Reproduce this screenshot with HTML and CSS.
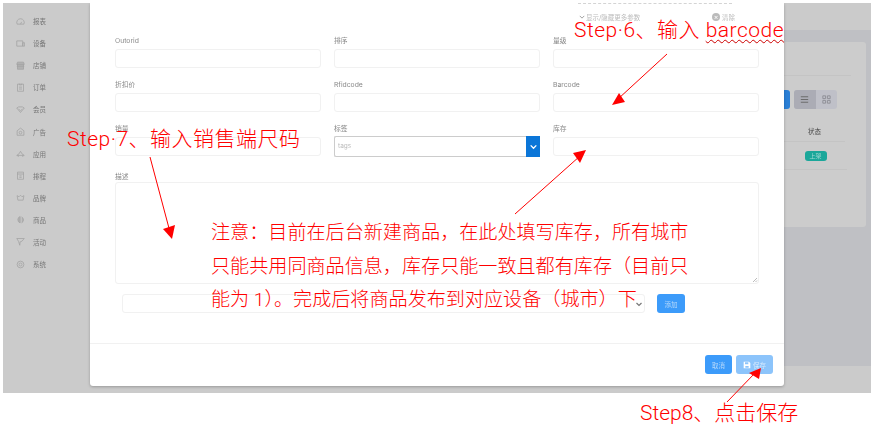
FILE: index.html
```html
<!DOCTYPE html>
<html lang="en">
<head>
	<meta charset="UTF-8">
	<title>新建商品</title>
	<link rel="stylesheet" href="styles.css">
</head>
<body>
	<div class="shot">
		<!-- page behind the dialog -->
		<div class="sidebar">
			<div class="nav-item"><svg viewBox="0 0 12 12"><path d="M1.500 9.500a5 5 0 1 1 9 0zM6 9.500l1.500-3"/></svg>报表</div>
			<div class="nav-item"><svg viewBox="0 0 12 12"><path d="M1 2.500h8v7H1zM9 5h2.500v4.500H9z"/></svg>设备</div>
			<div class="nav-item"><svg class="solid" viewBox="0 0 12 12"><path d="M2 1.500h8l1 3H1zM2 4.500V11h8V4.500M1 7h10"/></svg>店铺</div>
			<div class="nav-item"><svg viewBox="0 0 12 12"><path d="M2 1.500h8V11H2zM4.500 1v1.500h3V1M4 5.500h4M4 8h4"/></svg>订单</div>
			<div class="nav-item"><svg viewBox="0 0 12 12"><path d="M1 4 3.500 2.500h5L11 4 6 10zM3.500 5.500 6 7.500l2.500-2"/></svg>会员</div>
			<div class="nav-item"><svg viewBox="0 0 12 12"><path d="M1.500 5 6 1.500 10.500 5v6h-9z"/><circle cx="6" cy="7.500" r="1.800"/></svg>广告</div>
			<div class="nav-item"><svg viewBox="0 0 12 12"><path d="M6 3 8 6.500 11 8.500H1L4 6.500zM3 8.500V10.500M9 8.500V10.500"/></svg>应用</div>
			<div class="nav-item"><svg viewBox="0 0 12 12"><path d="M2 1.500h8V11H2zM2 4h8M4.500 6.500h3M4.500 8.500h3"/></svg>排程</div>
			<div class="nav-item"><svg viewBox="0 0 12 12"><path d="M1.500 3.500 4 5l2-2 2 2 2.500-1.500-1 6h-7z"/></svg>品牌</div>
			<div class="nav-item"><svg class="solid" viewBox="0 0 12 12"><path d="M5.500 2v8.500a4.500 4.500 0 0 1 0-8.500zM7.500 2.500a4.500 4.500 0 0 1 0 8"/></svg>商品</div>
			<div class="nav-item"><svg viewBox="0 0 12 12"><path d="M1 2h10L8 5.500 5.500 6.500 5 11 3.500 6z"/></svg>活动</div>
			<div class="nav-item"><svg viewBox="0 0 12 12"><circle cx="6" cy="6" r="4.500"/><circle cx="6" cy="6" r="2"/></svg>系统</div>
		</div>
		<div class="backdrop">
			<div class="top-strip"></div>
			<div class="band">
				<div class="card">
					<div class="card-rule"></div>
					<div class="toolbar">
						<div class="blue-btn"></div>
						<div class="toggle">
							<span class="toggle-on"><svg viewBox="0 0 12 12"><path d="M2 3h8M2 6h8M2 9h8"/></svg></span>
							<span class="toggle-off"><svg viewBox="0 0 12 12"><path d="M2 2h3v3H2zM7 2h3v3H7zM2 7h3v3H2zM7 7h3v3H7z"/></svg></span>
						</div>
					</div>
					<div class="col-head">状态</div>
					<div class="col-cell"><span class="badge">上架</span></div>
				</div>
			</div>
		</div>

		<!-- dialog -->
		<div class="modal">
			<div class="modal-body">
				<div class="dots"></div>
				<div class="more-row">
					<span class="more"><svg viewBox="0 0 8 8"><path d="M1 2.500 4 5.500 7 2.500"/></svg>显示/隐藏更多参数</span>
					<span class="clear"><i>×</i>清除</span>
				</div>
				<div class="form-grid">
					<div class="field"><label>Outorid</label><div class="input"></div></div>
					<div class="field"><label>排序</label><div class="input"></div></div>
					<div class="field"><label>量级</label><div class="input"></div></div>
					<div class="field"><label>折扣价</label><div class="input"></div></div>
					<div class="field"><label>Rfidcode</label><div class="input"></div></div>
					<div class="field"><label>Barcode</label><div class="input"></div></div>
					<div class="field"><label>销量</label><div class="input"></div></div>
					<div class="field"><label>标签</label>
						<div class="tags"><span>tags</span><b><svg viewBox="0 0 8 8"><path d="M1.500 3 4 5.500 6.500 3"/></svg></b></div>
					</div>
					<div class="field"><label>库存</label><div class="input"></div></div>
				</div>
				<div class="field desc"><label>描述</label><div class="textarea"><svg viewBox="0 0 6 6"><path d="M1 5 5 1M3.500 5 5 3.500"/></svg></div></div>
				<div class="add-row">
					<div class="select"><svg viewBox="0 0 8 8"><path d="M1.500 3 4 5.500 6.500 3"/></svg></div>
					<button class="btn btn-add">添加</button>
				</div>
			</div>
			<div class="modal-foot">
				<button class="btn">取消</button>
				<button class="btn btn-save"><svg viewBox="0 0 12 12"><path fill-rule="evenodd" d="M1 1h8l2 2v8H1zM3 2v3h5V2zM3.500 7.500v2.500h5V7.500z"/></svg>保存</button>
			</div>
		</div>
	</div>

	<!-- red annotations drawn on top of the screenshot -->
	<svg class="arrows" viewBox="0 0 876 426">
		<path d="M667 54 618 99M150 157 170 232M515 214 580 156M727 402 755 373"/>
		<polygon class="head" points="612,105 619,93 625,102"/>
		<polygon class="head" points="172,239 163,229 175,225"/>
		<polygon class="head" points="586,150 573,153 580,163"/>
		<polygon class="head" points="761,368 749,373 759,379"/>
	</svg>
	<div class="note step6">Step·6、输入 <u>barcode</u></div>
	<div class="note step7">Step·7、输入销售端尺码</div>
	<div class="note step8">Step8、点击保存</div>
	<div class="note warn">注意：目前在后台新建商品，在此处填写库存，所有城市<br>只能共用同商品信息，库存只能一致且都有库存（目前只<br>能为 1）。完成后将商品发布到对应设备（城市）下</div>
</body>
</html>
```

FILE: styles.css
```css
html, body {
	margin: 0;
	padding: 0;
	background-color: #fff;
	overflow: hidden;
}

body {
	width: 876px;
	height: 426px;
	position: relative;
	font-family: Inter, "Noto Sans CJK SC", sans-serif;
}

/* the captured page is a little soft, the annotations are not */
.shot {
	position: relative;
	display: flex;
	width: 868px;
	height: 390px;
	margin: 3px 0 0 3px;
	background-color: #cbcbcb;
	overflow: hidden;
	filter: blur(0.4px);
}

/* sidebar */
.sidebar {
	width: 87px;
	flex: none;
	padding-top: 7px;
	box-sizing: border-box;
	background-color: #cbcbcb;
}

.nav-item {
	display: flex;
	align-items: center;
	gap: 8px;
	height: 22.100px;
	padding-left: 13px;
	font-size: 6.500px;
	color: #777;
}

.nav-item svg {
	width: 9px;
	height: 9px;
	fill: none;
	stroke: #a2a2a2;
	stroke-width: 1;
}

.nav-item svg.solid {
	fill: #b2b2b2;
}

/* page behind dialog */
.backdrop {
	flex: 1;
	display: flex;
	flex-direction: column;
}

.top-strip {
	height: 27px;
}

.band {
	height: 336px;
	background-color: #bfc0c4;
	padding: 12px 5px 0 0;
	box-sizing: border-box;
}

.card {
	height: 185px;
	background-color: #cccccc;
	padding-left: 694px;
	border-radius: 0 3px 3px 0;
}

.card-rule {
	height: 1px;
	background-color: #c4c4c4;
	position: relative;
	top: 33px;
	width: 67px;
}

.toolbar {
	display: flex;
	gap: 4px;
	padding-top: 47px;
	height: 19px;
}

.blue-btn {
	width: 6px;
	height: 19px;
	background-color: #2a7fd6;
	border-radius: 0 3px 3px 0;
}

.toggle {
	display: flex;
	width: 43px;
	height: 19px;
	border-radius: 3px;
	overflow: hidden;
	background-color: #bfc0c8;
}

.toggle span {
	flex: 1;
	display: flex;
	align-items: center;
	justify-content: center;
}

.toggle-on {
	background-color: #abacb5;
}

.toggle svg {
	width: 11px;
	height: 11px;
	fill: none;
	stroke: #666;
	stroke-width: 1;
}

.toggle-off svg {
	stroke: #8d8d95;
}

.col-head {
	width: 61px;
	margin-top: 17px;
	height: 15px;
	font-size: 6.500px;
	color: #444;
	text-align: center;
	border-bottom: 1px solid #c4c4c4;
}

.col-cell {
	display: flex;
	justify-content: center;
	align-items: flex-start;
	width: 63px;
	height: 18px;
	padding-top: 9px;
	border-bottom: 1px solid #c4c4c4;
	line-height: 10px;
}

.badge {
	display: block;
	width: 22px;
	height: 10px;
	border-radius: 3px;
	background-color: #1ba79a;
	color: #9fd8d2;
	font-size: 6px;
	text-align: center;
}

/* dialog */
.modal {
	position: absolute;
	left: 87px;
	top: 0;
	width: 694px;
	height: 383px;
	background-color: #fff;
	border-radius: 0 0 3px 3px;
	box-shadow: 0 1px 3px rgba(0, 0, 0, 0.25);
	display: flex;
	flex-direction: column;
}

.modal-body {
	height: 341px;
	box-sizing: border-box;
	padding: 0 25px;
	border-bottom: 1px solid #f1f1f1;
}

.dots {
	width: 154px;
	margin-left: 463px;
	border-top: 1px dashed #d4d4d4;
}

.more-row {
	display: flex;
	height: 24px;
	padding: 9px 0 0 464px;
	box-sizing: border-box;
	font-size: 6.500px;
	color: #bbb;
}

.more {
	display: flex;
	align-items: center;
	gap: 1px;
	height: 8px;
	width: 133px;
}

.more svg {
	width: 6px;
	height: 6px;
	fill: none;
	stroke: #999;
	stroke-width: 1.2;
}

.clear {
	display: flex;
	align-items: center;
	gap: 2px;
	height: 8px;
}

.clear i {
	width: 8px;
	height: 8px;
	border-radius: 50%;
	background-color: #bbb;
	color: #fff;
	font-style: normal;
	font-size: 7px;
	line-height: 8px;
	text-align: center;
}

.form-grid {
	display: grid;
	grid-template-columns: 206px 206px 206px;
	column-gap: 13px;
	row-gap: 13px;
	padding-top: 9px;
}

.field label {
	display: block;
	height: 12px;
	font-size: 6.800px;
	line-height: 7px;
	color: #888;
}

.input {
	height: 19px;
	box-sizing: border-box;
	border: 1px solid #f1f1f1;
	border-radius: 3px;
}

.tags {
	display: flex;
	height: 21px;
	margin-top: -1px;
	box-sizing: border-box;
	border: 1px solid #ccc;
	border-right: none;
	border-radius: 2px;
	font-size: 6.500px;
	line-height: 19px;
	color: #bbb;
}

.tags span {
	flex: 1;
	padding-left: 3px;
}

.tags b {
	display: flex;
	align-items: center;
	justify-content: center;
	width: 14px;
	margin: -1px 0;
	background-color: #0b76d8;
}

.tags svg {
	width: 9px;
	height: 9px;
	fill: none;
	stroke: #fff;
	stroke-width: 1.2;
}

.desc {
	margin-top: 16px;
}

.desc label {
	height: 9px;
}

.textarea {
	display: flex;
	justify-content: flex-end;
	align-items: flex-end;
	height: 102px;
	box-sizing: border-box;
	border: 1px solid #f1f1f1;
	border-radius: 3px;
}

.textarea svg {
	width: 6px;
	height: 6px;
	fill: none;
	stroke: #aaa;
	stroke-width: 0.8;
}

.add-row {
	display: flex;
	gap: 12px;
	padding: 10px 0 0 7px;
}

.select {
	width: 523px;
	height: 19px;
	box-sizing: border-box;
	border: 1px solid #f1f1f1;
	border-radius: 3px;
	display: flex;
	justify-content: flex-end;
	align-items: center;
	padding-right: 1px;
}

.select svg {
	width: 8px;
	height: 8px;
	fill: none;
	stroke: #777;
	stroke-width: 1.2;
}

.btn {
	height: 19px;
	width: 27px;
	padding: 0;
	border: none;
	border-radius: 3px;
	background-color: #3c9bfa;
	color: #b5d8fb;
	font-family: inherit;
	font-size: 6.500px;
}

.btn-add {
	width: 28px;
}

.modal-foot {
	display: flex;
	justify-content: flex-end;
	gap: 4px;
	padding: 11px 11px 0 0;
}

.btn-save {
	display: flex;
	align-items: center;
	gap: 2px;
	width: 37px;
	padding: 0 0 0 7px;
	background-color: #8cc4fb;
	color: #d5e9fd;
}

.btn-save svg {
	width: 8px;
	height: 8px;
	fill: #fff;
}

/* annotations */
.arrows {
	position: absolute;
	left: 0;
	top: 0;
	width: 876px;
	height: 426px;
	fill: none;
	stroke: #f00;
	stroke-width: 1;
}

.arrows .head {
	fill: #f00;
	stroke: none;
}

.note {
	position: absolute;
	color: #f00;
	font-family: Roboto, "Noto Sans CJK SC", sans-serif;
	font-weight: 300;
	font-size: 21px;
	line-height: 26px;
	white-space: nowrap;
}

.note u {
	text-decoration: underline wavy #c00 1px;
	text-underline-offset: 2px;
}

.step6 { left: 574px; top: 17px; letter-spacing: 0.5px; }
.step7 { left: 67px; top: 126px; letter-spacing: 0.5px; }
.step8 { left: 640px; top: 400px; }
.warn { left: 211px; top: 216px; line-height: 33.500px; font-size: 19.100px; }
```
